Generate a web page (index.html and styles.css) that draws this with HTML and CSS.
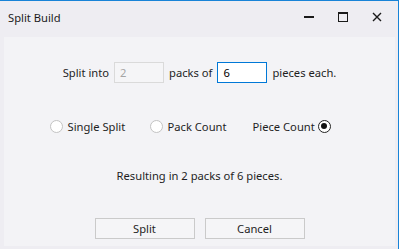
FILE: index.html
```html
<!DOCTYPE html>
<html>
<head>
<meta charset="utf-8">
<link rel="stylesheet" href="styles.css">
</head>
<body>
<div class="window">
  <div class="titlebar">
    <span class="title">Split Build</span>
    <div class="controls">
      <span class="ctl"><svg width="12" height="12" viewBox="0 0 12 12"><rect x="1" y="5" width="10" height="2" fill="#1a1a1a"/></svg></span>
      <span class="ctl"><svg width="12" height="12" viewBox="0 0 12 12"><rect x="1.5" y="1.5" width="9" height="9" fill="none" stroke="#1a1a1a" stroke-width="1"/><rect x="1" y="1" width="10" height="2" fill="#1a1a1a"/></svg></span>
      <span class="ctl"><svg width="12" height="12" viewBox="0 0 12 12"><path d="M2 2 L10 10 M10 2 L2 10" stroke="#1a1a1a" stroke-width="1.4"/></svg></span>
    </div>
  </div>
  <div class="content">
    <div class="row split-row">
      <span>Split into</span>
      <span class="textbox disabled">2</span>
      <span>packs of</span>
      <span class="textbox active">6</span>
      <span>pieces each.</span>
    </div>
    <div class="radios">
      <label class="radio"><span class="circle"></span><span>Single Split</span></label>
      <label class="radio"><span class="circle"></span><span>Pack Count</span></label>
      <label class="radio rtl"><span>Piece Count</span><span class="circle checked"></span></label>
    </div>
    <div class="result">Resulting in 2 packs of 6 pieces.</div>
    <div class="buttons">
      <button class="btn">Split</button>
      <button class="btn">Cancel</button>
    </div>
  </div>
</div>
</body>
</html>
```
FILE: styles.css
```css
* { box-sizing: border-box; }
html, body { margin: 0; padding: 0; }
body {
  width: 399px;
  height: 249px;
  overflow: hidden;
  font-family: "Noto Sans", "Open Sans", sans-serif;
  font-size: 11.2px;
  color: #1e1e1e;
}
.window {
  width: 399px;
  height: 249px;
  background: #eeedf2;
  border-top: 1px solid #1883d7;
  border-right: 1px solid #1883d7;
  display: flex;
  flex-direction: column;
  padding: 0 3px 3px 4px;
}
.titlebar {
  height: 36px;
  padding-bottom: 4px;
  display: flex;
  align-items: center;
  justify-content: space-between;
}
.title {
  padding-left: 4px;
  color: #1a1a1a;
}
.controls {
  display: flex;
  gap: 22px;
  padding-right: 12px;
}
.ctl { display: flex; width: 12px; height: 12px; }
.content {
  flex: 1;
  background: #f3f3f6;
  display: flex;
  flex-direction: column;
  align-items: center;
}
.row {
  display: flex;
  align-items: center;
  gap: 5px;
}
.split-row { margin-top: 25px; height: 21px; }
.textbox {
  width: 50px;
  height: 21px;
  padding: 1px 5px;
  line-height: 17px;
  border: 1px solid #cfcfcf;
  background: #f5f5f7;
}
.textbox.disabled { color: #a5a5a5; border-color: #dadada; }
.textbox.active { border-color: #0078d7; background: #fff; color: #000; }
.radios {
  margin-top: 33px;
  display: grid;
  grid-template-columns: 100px 100px 100px;
  height: 20px;
}
.radio {
  display: flex;
  align-items: center;
  gap: 5px;
}
.radio.rtl { padding-left: 3px; gap: 3px; }
.circle {
  width: 13px;
  height: 13px;
  border-radius: 50%;
  border: 1px solid #c3c3c3;
  background: #fff;
  position: relative;
}
.circle.checked { border-color: #222; }
.circle.checked::after {
  content: "";
  position: absolute;
  left: 2.5px;
  top: 2.5px;
  width: 6px;
  height: 6px;
  border-radius: 50%;
  background: #111;
}
.result {
  margin-top: 32px;
  height: 16px;
  line-height: 16px;
}
.buttons {
  margin-top: 34px;
  display: flex;
  gap: 10px;
}
.btn {
  width: 100px;
  height: 21px;
  font-family: inherit;
  font-size: 11.2px;
  color: #1e1e1e;
  background: #f5f5f7;
  border: 1px solid #cacaca;
  padding: 0;
}
```
